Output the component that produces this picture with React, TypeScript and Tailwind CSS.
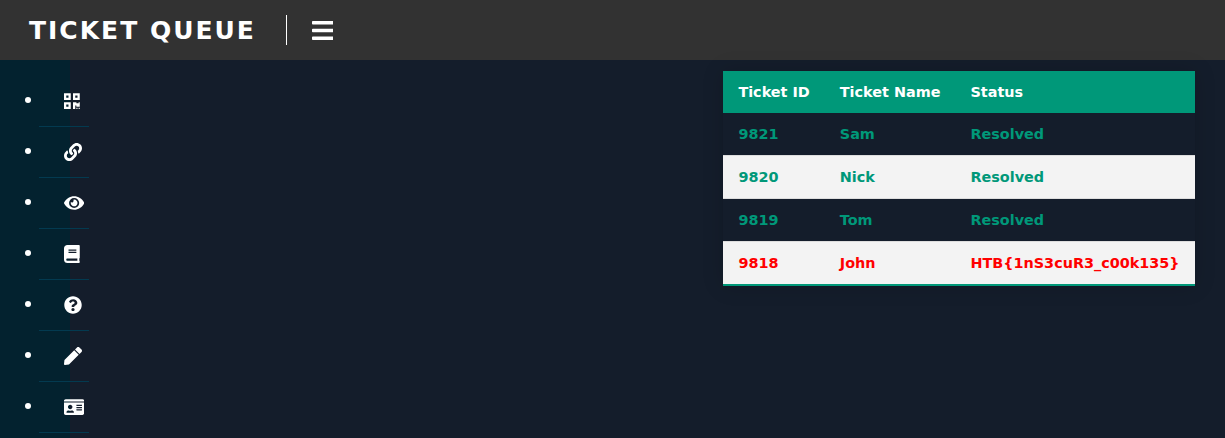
import React from "react";
import { FaBars, FaQrcode, FaLink, FaEye, FaBook, FaQuestionCircle, FaPen, FaIdCard } from "react-icons/fa";

const links = [
  { Icon: FaQrcode, width: "w-[15.75px]" },
  { Icon: FaLink, width: "w-[18px]" },
  { Icon: FaEye, width: "w-[20.25px]" },
  { Icon: FaBook, width: "w-[15.75px]" },
  { Icon: FaQuestionCircle, width: "w-[18px]" },
  { Icon: FaPen, width: "w-[18px]" },
  { Icon: FaIdCard, width: "w-[20.25px]" },
];

const tickets = [
  { id: "9821", name: "Sam", status: "Resolved" },
  { id: "9820", name: "Nick", status: "Resolved" },
  { id: "9819", name: "Tom", status: "Resolved" },
  { id: "9818", name: "John", status: "HTB{1nS3cuR3_c00k135}", open: true },
];

export default function App() {
  return (
    <div className="flex h-[438px] flex-col overflow-hidden bg-[#141d2b] font-['DejaVu_Sans',sans-serif] text-white">
      <header className="flex h-[60px] shrink-0 items-center bg-[#323232] pl-[29px]">
        <h1 className="w-[257px] whitespace-nowrap pt-0.5 text-[25px] leading-[30px] font-bold tracking-[2px]">TICKET QUEUE</h1>
        <div className="h-[30px] w-px bg-white" />
        <FaBars className="ml-[24.5px] h-[25px] w-[21.875px]" />
      </header>
      <div className="flex min-h-0 flex-1 justify-between">
        <nav className="w-[69.5px] shrink-0 bg-[#03222f] pt-4">
          <ul>
            {links.map(({ Icon, width }, i) => (
              <li key={i} className="flex h-[51px] w-[89px] items-center pl-[25px]">
                <span className="mb-[3px] h-[6px] w-[6px] rounded-full bg-white" />
                <span className="ml-2 flex h-[51px] w-[50px] shrink-0 items-center border-b border-[#033a50] pl-[25px]">
                  <Icon className={`h-[18px] shrink-0 ${width}`} />
                </span>
              </li>
            ))}
          </ul>
        </nav>
        <main className="mr-[30.4px] pt-[11px]">
          <table className="border-collapse text-[14.4px] leading-[18px] font-bold whitespace-nowrap shadow-[0_0_20px_rgba(0,0,0,0.15)]">
            <thead>
              <tr className="bg-[#009879] text-left text-white">
                <th className="px-[15px] py-3">Ticket ID</th>
                <th className="px-[15px] py-3">Ticket Name</th>
                <th className="px-[15px] py-3">Status</th>
              </tr>
            </thead>
            <tbody>
              {tickets.map((t) => (
                <tr
                  key={t.id}
                  className={`border-b border-[#dddddd] even:bg-[#f3f3f3] last:border-b-2 last:border-[#009879] ${t.open ? "text-[#ff0000]" : "text-[#009879]"}`}
                >
                  <td className="px-[15px] py-3">{t.id}</td>
                  <td className="px-[15px] py-3">{t.name}</td>
                  <td className="px-[15px] py-3">{t.status}</td>
                </tr>
              ))}
            </tbody>
          </table>
        </main>
      </div>
    </div>
  );
}
